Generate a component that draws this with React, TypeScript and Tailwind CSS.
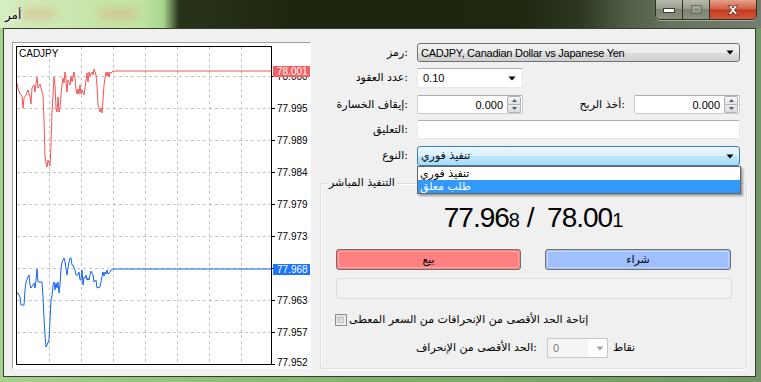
import React from 'react';

// price series, in screen coordinates (viewBox of the chart matches the page)
const RED =
  '17,83 18,88 20,94 22,96 23,108 24,98 26,95 28,90 30,97 31,104 32,88 34,85 35,92 36,84 37,77 38,88 40,84 42,92 43,95 44,120 45,156 46,163 47,167 48,160 50,166 51,145 52,112 53,95 54,77 55,85 56,108 57,112 58,97 59,112 60,108 61,95 62,85 63,78 64,83 65,72 66,80 67,92 68,80 70,85 71,76 72,82 74,72 75,78 76,90 77,94 78,89 79,94 80,85 81,94 82,90 84,95 85,88 86,80 87,73 88,82 89,72 90,76 92,72 93,75 94,69 95,72 96,75 97,85 98,105 99,108 100,112 101,108 102,113 103,100 104,85 105,78 106,72 107,76 108,72 109,77 110,72 111,73 113,71 272,71';

const BLUE =
  '17,293 18,293 20,297 21,305 24,305 25,290 26,282 28,277 29,275 30,285 31,288 33,285 34,283 35,288 36,280 37,269 38,282 40,282 42,282 43,297 44,318 45,335 46,347 47,345 49,340 50,320 51,300 52,296 53,285 54,282 55,290 56,283 57,288 58,282 59,293 60,285 61,270 62,262 64,258 65,262 67,275 68,268 69,262 70,258 71,258 72,265 73,265 75,270 76,275 78,275 79,272 80,280 81,280 82,270 83,285 84,277 85,278 86,275 87,280 88,278 89,280 90,275 91,271 93,275 94,282 96,280 97,288 100,287 101,282 102,277 103,272 104,276 105,272 106,274 107,270 108,274 110,272 111,270 113,269 272,269';

const VGRID = [49, 81, 113, 145, 177, 209, 241];
const HGRID = [76, 108, 140, 172, 204, 236, 268, 300, 332];
const SCALE: [string, number][] = [
  ['78.000', 80],
  ['77.995', 112],
  ['77.989', 144],
  ['77.984', 176],
  ['77.979', 208],
  ['77.973', 240],
  ['77.968', 272],
  ['77.963', 304],
  ['77.957', 336],
  ['77.952', 366],
];

const Arrow = ({ color = '#000' }: { color?: string }) => (
  <svg width="8" height="5" viewBox="0 0 8 5">
    <path d="M0.5 0.5h7L4 4.5z" fill={color} />
  </svg>
);

const TitleBar = () => (
  <div className="relative h-[28px] flex items-start bg-[linear-gradient(to_right,#d6edc0_0%,#c7e6aa_12%,#bfe3a0_19%,#a9d48c_21.5%,#28341a_23.5%,#1d250d_40%,#1f270f_68%,#2c3620_76%,#4f5c44_82%,#66725c_88%,#747e6c_100%)]">
    <div className="absolute left-[20px] top-[8px] w-[36px] h-[12px] rounded-full bg-[#d9b98a] opacity-60 blur-[4px]" />
    <div className="absolute left-[98px] top-[8px] w-[40px] h-[12px] rounded-full bg-[#d9b98a] opacity-60 blur-[4px]" />
    <div className="relative ml-[5px] mt-[8px] text-[12px] leading-[14px] font-['DejaVu_Sans',sans-serif] [text-shadow:0_0_4px_#fff,0_0_2px_#fff]">
      أمر
    </div>
    <div className="ml-auto mr-[4px] flex h-[20px] rounded-b-[5px] border border-t-0 border-[#2e3226] overflow-hidden shadow-[0_1px_0_rgba(255,255,255,0.4)]">
      <div className="w-[27px] flex items-center justify-center border-r border-[#2e3226] bg-[linear-gradient(#b8bcae,#979d8c_45%,#7d8572_50%,#8a917f)]">
        <svg width="12" height="6" viewBox="0 0 12 6">
          <rect x="0.5" y="1.5" width="11" height="4" fill="#fff" stroke="#3a3d34" />
        </svg>
      </div>
      <div className="w-[27px] flex items-center justify-center border-r border-[#2e3226] bg-[linear-gradient(#b8bcae,#979d8c_45%,#7d8572_50%,#8a917f)]">
        <svg width="11" height="9" viewBox="0 0 11 9">
          <rect x="0.5" y="0.5" width="10" height="8" fill="none" stroke="#6c7064" />
          <rect x="2.5" y="2.5" width="6" height="4" fill="none" stroke="#a6aa9e" />
        </svg>
      </div>
      <div className="w-[46px] flex items-center justify-center bg-[linear-gradient(#e6a08c,#d2654b_45%,#c23a1e_52%,#d4583a)]">
        <svg width="14" height="12" viewBox="0 0 14 12">
          <path d="M2 1.5h3l2 2.6 2-2.6h3l-3.5 4.5 3.5 4.5h-3l-2-2.6-2 2.6h-3l3.5-4.5z" fill="#fff" stroke="#5a2418" strokeWidth="0.8" />
        </svg>
      </div>
    </div>
  </div>
);

const ChartPanel = () => (
  <div className="ml-[8px] mt-[13px] w-[299px] h-[327px] shrink-0 border border-t-[#a0a0a0] border-l-[#a0a0a0] border-b-white border-r-white bg-white">
    <svg width="297" height="325" viewBox="13 43 297 325" className="block">
      {VGRID.map((x) => (
        <line key={'v' + x} x1={x + 0.5} y1={47} x2={x + 0.5} y2={364} stroke="#c4c4c4" strokeDasharray="3 3" />
      ))}
      {HGRID.map((y) => (
        <line key={'h' + y} x1={17} y1={y + 0.5} x2={271} y2={y + 0.5} stroke="#c4c4c4" strokeDasharray="3 3" />
      ))}
      <polyline points={RED} fill="none" stroke="#f25656" strokeWidth="1" />
      <polyline points={BLUE} fill="none" stroke="#1565f5" strokeWidth="1" />
      <rect x="16.5" y="46.5" width="255" height="318" fill="none" stroke="#000" />
      {[76, 108, 140, 172, 204, 236, 268, 300, 332, 364].map((y) => (
        <line key={'t' + y} x1={272} y1={y + 0.5} x2={275} y2={y + 0.5} stroke="#000" />
      ))}
      {SCALE.map(([t, y]) => (
        <text key={t} x={277} y={y} fontSize="10" fontFamily="Liberation Sans, Arial, sans-serif" fill="#000">
          {t}
        </text>
      ))}
      <rect x="273" y="66" width="37" height="11" fill="#f36262" />
      <text x={277} y={75} fontSize="10" fontFamily="Liberation Sans, Arial, sans-serif" fill="#fff">
        78.001
      </text>
      <rect x="273" y="264" width="37" height="11" fill="#1c74ff" />
      <text x={277} y={273} fontSize="10" fontFamily="Liberation Sans, Arial, sans-serif" fill="#fff">
        77.968
      </text>
      <text x={19} y={57} fontSize="10" fontFamily="Liberation Sans, Arial, sans-serif" fill="#000">
        CADJPY
      </text>
    </svg>
  </div>
);

// field label: text then colon, right-aligned against the field
const Label = ({ text, w }: { text: string; w: string }) => (
  <div className={`${w} shrink-0 flex justify-end leading-[14px] font-['DejaVu_Sans',sans-serif] text-[11px]`}>
    <span>{text}</span>
    <span>:</span>
  </div>
);

const Spin = () => (
  <div className="w-[106px] h-[19px] flex items-center bg-white border border-[#c9cdd2] border-t-[#abadb3] rounded-[2px]">
    <div className="flex-1 text-right pr-[4px] leading-[14px]">0.000</div>
    <div className="w-[14px] h-[17px] flex flex-col mr-[1px]">
      <div className="flex-1 flex items-center justify-center border border-[#b0b4b8] rounded-t-[2px] bg-[linear-gradient(#f6f6f6,#e4e4e4)]">
        <svg width="5" height="3" viewBox="0 0 5 3">
          <path d="M0 3h5L2.5 0z" fill="#4a5a78" />
        </svg>
      </div>
      <div className="flex-1 flex items-center justify-center border border-t-0 border-[#b0b4b8] rounded-b-[2px] bg-[linear-gradient(#ececec,#dcdcdc)]">
        <svg width="5" height="3" viewBox="0 0 5 3">
          <path d="M0 0h5L2.5 3z" fill="#4a5a78" />
        </svg>
      </div>
    </div>
  </div>
);

const OrderForm = () => (
  <div className="ml-[9px] w-[428px] pt-[14px] flex flex-col">
    {/* symbol */}
    <div className="flex items-center h-[19px]">
      <Label w="w-[88px]" text="رمز" />
      <div className="ml-[9px] w-[323px] h-[19px] flex items-center rounded-[3px] border border-[#707070] bg-[linear-gradient(#f2f2f2_0%,#ebebeb_50%,#dddddd_50%,#cfcfcf_100%)]">
        <div className="flex-1 pl-[3px] leading-[14px] tracking-[-0.25px]">CADJPY, Canadian Dollar vs Japanese Yen</div>
        <div className="mr-[5px]">
          <Arrow />
        </div>
      </div>
    </div>

    {/* volume */}
    <div className="flex items-center h-[20px] mt-[6px]">
      <Label w="w-[88px]" text="عدد العقود" />
      <div className="ml-[9px] w-[106px] h-[20px] flex items-center bg-white border border-[#e3e9ef] border-t-[#abadb3]">
        <div className="flex-1 pl-[5px] leading-[14px]">0.10</div>
        <div className="mr-[6px]">
          <Arrow />
        </div>
      </div>
    </div>

    {/* sl / tp */}
    <div className="flex items-center h-[19px] mt-[7px]">
      <Label w="w-[88px]" text="إيقاف الخسارة" />
      <div className="ml-[9px]">
        <Spin />
      </div>
      <Label w="w-[102px]" text="أخذ الربح" />
      <div className="ml-[9px]">
        <Spin />
      </div>
    </div>

    {/* comment */}
    <div className="flex items-center h-[19px] mt-[6px]">
      <Label w="w-[88px]" text="التعليق" />
      <div className="ml-[9px] w-[323px] h-[19px] bg-white border border-[#e3e9ef] border-t-[#abadb3] rounded-[2px]" />
    </div>

    {/* type */}
    <div className="flex items-center h-[20px] mt-[7px] relative z-10">
      <Label w="w-[88px]" text="النوع" />
      <div className="ml-[9px] relative">
        <div className="w-[323px] h-[20px] flex items-center rounded-[3px] border border-[#3c7fb1] bg-[linear-gradient(#eaf6fd_0%,#d9f0fc_50%,#bee6fd_50%,#a7d9f5_100%)]">
          <div className="flex-1 pl-[3px] leading-[14px] font-['DejaVu_Sans',sans-serif]">تنفيذ فوري</div>
          <div className="mr-[5px]">
            <Arrow />
          </div>
        </div>
        <div className="absolute left-0 top-[20px] w-[324px] border border-[#646464] bg-white shadow-[2px_2px_2px_rgba(0,0,0,0.35)] font-['DejaVu_Sans',sans-serif]">
          <div className="h-[13px] leading-[13px] pl-[2px]">تنفيذ فوري</div>
          <div className="h-[13px] leading-[13px] pl-[2px] bg-[#3399ff] text-white">طلب معلق</div>
        </div>
      </div>
    </div>

    {/* market execution group */}
    <div className="mt-[17px] w-[427px] h-[186px] relative rounded-[3px] border border-[#d5dfe5] shadow-[inset_1px_1px_0_#fff,1px_1px_0_#fff] flex flex-col items-center">
      <div className="absolute left-[6px] top-[-8px] px-[2px] bg-[#f0f0f0] leading-[14px] font-['DejaVu_Sans',sans-serif]">
        التنفيذ المباشر
      </div>

      <div className="mt-[18px] h-[32px] leading-[32px] text-[28px] tracking-[-1px] whitespace-pre">
        77.96<span className="text-[20px] tracking-normal">8</span> /  78.00<span className="text-[20px] tracking-normal">1</span>
      </div>

      <div className="mt-[15px] w-[395px] flex justify-between">
        <div className="w-[185px] h-[21px] rounded-[3px] border border-[#707070] p-[1px] bg-[#ff8080]">
          <div className="h-full flex items-center justify-center border border-[#ffa6a6] rounded-[2px] leading-[14px] font-['DejaVu_Sans',sans-serif]">
            بيع
          </div>
        </div>
        <div className="w-[186px] h-[21px] rounded-[3px] border border-[#707070] p-[1px] bg-[#9fbfff]">
          <div className="h-full flex items-center justify-center border border-[#c0d6ff] rounded-[2px] leading-[14px] font-['DejaVu_Sans',sans-serif]">
            شراء
          </div>
        </div>
      </div>

      <div className="mt-[8px] w-[396px] h-[21px] rounded-[3px] border border-[#d5dfe5] bg-[#f2f2f2]" />

      <div className="mt-[14px] self-start ml-[14px] flex items-center h-[13px]">
        <div className="w-[12px] h-[12px] border border-[#8e8f8f] bg-[linear-gradient(135deg,#dcdcdc,#f4f4f4)] p-[2px]">
          <div className="w-full h-full border border-[#c4c4c4] bg-[linear-gradient(135deg,#d0d0d0,#eeeeee)]" />
        </div>
        <div className="ml-[2px] leading-[14px] font-['DejaVu_Sans',sans-serif]">
          إتاحة الحد الأقصى من الإنحرافات من السعر المعطى
        </div>
      </div>

      <div className="mt-[12px] self-start flex items-center h-[20px]">
        <Label w="w-[216px]" text="الحد الأقصى من الإنحراف" />
        <div className="ml-[10px] w-[61px] h-[20px] flex items-center border border-[#c5c9cc] bg-white">
          <div className="w-[40px] h-full bg-[#f4f4f4] pl-[5px] leading-[18px] text-[#7a7a7a]">0</div>
          <div className="ml-[8px]">
            <Arrow color="#a0a0a0" />
          </div>
        </div>
        <div className="ml-[5px] leading-[14px] font-['DejaVu_Sans',sans-serif]">نقاط</div>
      </div>
    </div>
  </div>
);

export default function App() {
  return (
    <div className="w-[761px] h-[382px] flex flex-col overflow-hidden bg-[linear-gradient(to_right,#a6d08e,#7fb06e_50%,#74966a)] font-['Liberation_Sans','DejaVu_Sans',sans-serif] text-[11px] text-black">
      <TitleBar />
      <div className="ml-[3px] mr-[5px] mb-[5px] flex-1 flex border border-[#34402a] bg-[#f0f0f0]">
        <ChartPanel />
        <OrderForm />
      </div>
    </div>
  );
}
